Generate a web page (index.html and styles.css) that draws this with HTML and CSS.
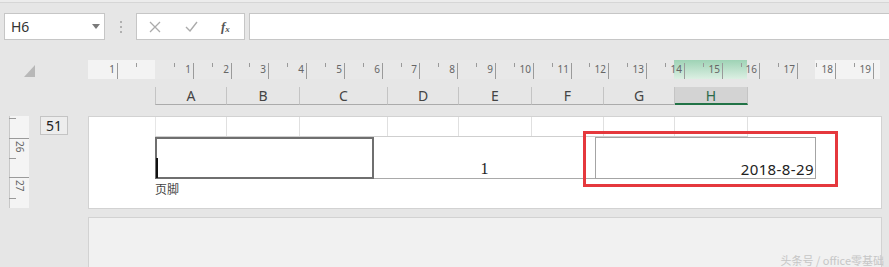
FILE: index.html
```html
<!DOCTYPE html>
<html>
<head>
<meta charset="utf-8">
<link rel="stylesheet" href="styles.css">
</head>
<body>
<div class="app">
  <div class="topline"></div>
  <div class="fbar">
    <div class="namebox"><span class="nb-text">H6</span>
      <svg class="dd" width="8" height="5" viewBox="0 0 8 5"><path d="M0 0h8L4 5z" fill="#7a7a7a"/></svg>
    </div>
    <div class="sep"><i></i><i></i><i></i></div>
    <div class="btns">
      <svg class="ic" width="12" height="12" viewBox="0 0 12 12"><path d="M1 1L11 11M11 1L1 11" stroke="#ababab" stroke-width="1.3" fill="none"/></svg>
      <svg class="ic" width="13" height="11" viewBox="0 0 13 11"><path d="M1 6l4 4L12 1" stroke="#ababab" stroke-width="1.4" fill="none"/></svg>
      <span class="fx">f<sub>x</sub></span>
    </div>
    <div class="finput"></div>
  </div>
  <div class="rulerrow">
    <div class="corner"><svg width="11" height="12" viewBox="0 0 11 12"><path d="M11 0V12H0z" fill="#b8b8b8"/></svg></div>
    <svg class="hruler" width="792" height="19" viewBox="0 0 792 19" id="hruler"></svg>
  </div>
  <div class="colhead">
    <div class="ch first">A</div>
    <div class="ch w73">B</div>
    <div class="ch w88">C</div>
    <div class="ch w71">D</div>
    <div class="ch w73">E</div>
    <div class="ch w72">F</div>
    <div class="ch w71">G</div>
    <div class="ch w73 sel">H</div>
  </div>
  <div class="main">
    <svg class="vruler" width="20" height="92" viewBox="0 0 20 92">
      <rect x="0" y="0" width="20" height="92" fill="#f4f4f4"/>
      <line x1="0.5" y1="0" x2="0.5" y2="92" stroke="#c8c8c8"/>
      <line x1="0" y1="2.5" x2="7" y2="2.5" stroke="#9a9a9a"/>
      <line x1="0" y1="22.5" x2="20" y2="22.5" stroke="#9a9a9a"/>
      <line x1="0" y1="42.5" x2="7" y2="42.5" stroke="#9a9a9a"/>
      <line x1="0" y1="61.5" x2="20" y2="61.5" stroke="#9a9a9a"/>
      <line x1="0" y1="82.5" x2="7" y2="82.5" stroke="#9a9a9a"/>
      <text x="3" y="29" transform="rotate(90 7 29)" class="vr-num">26</text>
      <text x="3" y="68" transform="rotate(90 7 68)" class="vr-num">27</text>
    </svg>
    <div class="rowhead">51</div>
    <div class="pages">
      <div class="page p1">
        <div class="gridrow">
          <div class="gc first"></div>
          <div class="gc w73"></div>
          <div class="gc w88"></div>
          <div class="gc w71"></div>
          <div class="gc w73"></div>
          <div class="gc w72"></div>
          <div class="gc w71"></div>
          <div class="gc w73"></div>
        </div>
        <div class="footrow">
          <div class="fl"><span class="cursor"></span></div>
          <div class="fm">1</div>
          <div class="fr">2018-8-29</div>
        </div>
        <div class="flabel">页脚</div>
        <div class="redbox"></div>
      </div>
      <div class="page p2">
        <div class="wm">头条号 / office零基础</div>
      </div>
    </div>
  </div>
</div>
<script src="ruler.js"></script>
</body>
</html>
```

FILE: ruler.js
```js
(function(){
  var svg = document.getElementById('hruler');
  var ns = 'http://www.w3.org/2000/svg';
  function el(name, attrs, text){
    var e = document.createElementNS(ns, name);
    for (var k in attrs) e.setAttribute(k, attrs[k]);
    if (text !== undefined) e.textContent = text;
    svg.appendChild(e);
    return e;
  }
  var defs = el('defs', {});
  var g = document.createElementNS(ns, 'linearGradient');
  g.setAttribute('id', 'gr'); g.setAttribute('x1', '0'); g.setAttribute('y1', '0');
  g.setAttribute('x2', '0'); g.setAttribute('y2', '1');
  defs.appendChild(g);
  var s1 = document.createElementNS(ns,'stop'); s1.setAttribute('offset','0'); s1.setAttribute('stop-color','#9ed3b5'); g.appendChild(s1);
  var s2 = document.createElementNS(ns,'stop'); s2.setAttribute('offset','1'); s2.setAttribute('stop-color','#dcefe3'); g.appendChild(s2);
  el('rect', {x:0, y:0, width:792, height:19, fill:'#e8e8e8'});
  el('rect', {x:0, y:0, width:67, height:19, fill:'#f3f3f3'});
  el('rect', {x:727, y:0, width:65, height:19, fill:'#f3f3f3'});
  el('rect', {x:586, y:0, width:73, height:19, fill:'url(#gr)'});
  var zero = 67, step = 37.78;
  for (var k = -1; k <= 19; k++) {
    var x = Math.round(zero + k*step) + 0.5;
    if (k !== 0) {
      el('line', {x1:x, y1:3, x2:x, y2:19, stroke:'#9a9a9a', 'stroke-width':1});
      el('text', {x:x-2.5, y:13, 'text-anchor':'end', 'class':'hr-num'}, String(Math.abs(k)));
    }
    var m = Math.round(zero + (k+0.5)*step) + 0.5;
    if (m > 0 && m < 790) el('line', {x1:m, y1:3, x2:m, y2:7, stroke:'#9a9a9a', 'stroke-width':1});
  }
})();
```

FILE: styles.css
```css
html, body {
  margin: 0;
  padding: 0;
  background: #e6e6e6;
  overflow: hidden;
}
.app {
  width: 889px;
  height: 267px;
  font-family: "Noto Sans", "Open Sans", "Liberation Sans", sans-serif;
  color: #333;
}
.topline {
  height: 2px;
  border-bottom: 1px solid #d6d6d6;
  background: #ececec;
}
.fbar {
  display: flex;
  align-items: center;
  padding: 10px 0 0 4px;
  height: 27px;
}
.namebox, .btns, .finput {
  box-sizing: border-box;
  height: 27px;
  background: #fff;
  border: 1px solid #c6c6c6;
}
.namebox {
  width: 101px;
  display: flex;
  align-items: center;
  justify-content: space-between;
  padding: 0 4px 0 6px;
}
.nb-text {
  font-size: 14px;
  color: #333;
}
.dd { display: block; }
.sep {
  width: 31px;
  display: flex;
  flex-direction: column;
  align-items: center;
  gap: 3px;
}
.sep i {
  display: block;
  width: 2px;
  height: 2px;
  background: #b0b0b0;
}
.btns {
  width: 109px;
  display: flex;
  align-items: center;
  padding-left: 12px;
  gap: 24px;
}
.ic { display: block; }
.fx {
  font-family: "Liberation Serif", "DejaVu Serif", serif;
  font-style: italic;
  font-weight: bold;
  font-size: 13px;
  color: #555;
  margin-left: -1px;
}
.fx sub {
  font-size: 9px;
  vertical-align: -1px;
}
.finput {
  margin-left: 4px;
  flex: 1;
  border-right: none;
}
.rulerrow {
  display: flex;
  margin-top: 20px;
  height: 19px;
}
.corner {
  width: 88px;
  padding: 5px 0 0 24px;
  box-sizing: border-box;
}
.corner svg { display: block; }
.hruler { display: block; }
.hr-num {
  font-family: "Noto Sans", "Liberation Sans", sans-serif;
  font-size: 10px;
  fill: #666;
}
.colhead {
  display: flex;
  margin-top: 8px;
  padding-left: 155px;
  height: 18px;
}
.ch {
  box-sizing: border-box;
  height: 18px;
  border-right: 1px solid #c4c4c4;
  border-bottom: 1px solid #ababab;
  font-size: 14px;
  color: #444;
  text-align: center;
  line-height: 18px;
}
.ch.first, .gc.first {
  width: 72px;
  border-left: 1px solid #c4c4c4;
}
.w73 { width: 73px; }
.w88 { width: 88px; }
.w71 { width: 71px; }
.w72 { width: 72px; }
.ch.sel {
  background: #d3d3d3;
  border-bottom: 2px solid #217346;
  color: #2b6a49;
}
.main {
  display: flex;
  margin-top: 11px;
  align-items: flex-start;
}
.vruler {
  display: block;
  margin-left: 9px;
}
.vr-num {
  font-family: "Noto Sans", "Liberation Sans", sans-serif;
  font-size: 10px;
  fill: #666;
}
.rowhead {
  box-sizing: border-box;
  margin-left: 11px;
  width: 28px;
  height: 19px;
  border: 1px solid #c4c4c4;
  background: #ededed;
  font-size: 14px;
  line-height: 17px;
  text-align: center;
  color: #222;
}
.pages {
  margin-left: 20px;
  width: 794px;
  display: flex;
  flex-direction: column;
  gap: 8px;
}
.page {
  box-sizing: border-box;
  border: 1px solid #d2d2d2;
  position: relative;
}
.p1 {
  background: #fff;
  height: 93px;
  padding-left: 66px;
}
.gridrow {
  display: flex;
  height: 20px;
  width: 593px;
  border-bottom: 1px solid #cfcfcf;
  box-sizing: border-box;
}
.gc {
  box-sizing: border-box;
  height: 19px;
  border-right: 1px solid #e0e0e0;
}
.gc.first { border-left-color: #e6e6e6; }
.footrow {
  display: flex;
  height: 42px;
}
.fl {
  box-sizing: border-box;
  width: 219px;
  height: 42px;
  border: 2px solid #6f6f6f;
  position: relative;
}
.cursor {
  position: absolute;
  left: -1px;
  bottom: -1px;
  width: 2px;
  height: 20px;
  background: #111;
}
.fm {
  box-sizing: border-box;
  width: 221px;
  height: 42px;
  border-bottom: 1px solid #a9a9a9;
  font-family: "Liberation Serif", "DejaVu Serif", serif;
  font-size: 16px;
  color: #222;
  text-align: center;
  padding-top: 23px;
  line-height: 18px;
}
.fr {
  box-sizing: border-box;
  width: 221px;
  height: 42px;
  border: 1px solid #a4a4a4;
  font-size: 15px;
  letter-spacing: 0.4px;
  color: #222;
  text-align: right;
  padding: 22px 1px 0 0;
  line-height: 18px;
}
.flabel {
  margin-top: 2px;
  font-family: "Noto Sans CJK SC", "Noto Sans", sans-serif;
  font-size: 12px;
  line-height: 16px;
  color: #444;
}
.redbox {
  position: absolute;
  left: 494px;
  top: 14px;
  width: 255px;
  height: 56px;
  box-sizing: border-box;
  border: 3px solid #e5383d;
}
.p2 {
  background: #f1f1f1;
  height: 60px;
}
.wm {
  position: absolute;
  right: -3px;
  top: 34px;
  font-family: "Noto Sans CJK SC", "Noto Sans", sans-serif;
  font-size: 11px;
  color: #c6c6c6;
  white-space: nowrap;
}
```
